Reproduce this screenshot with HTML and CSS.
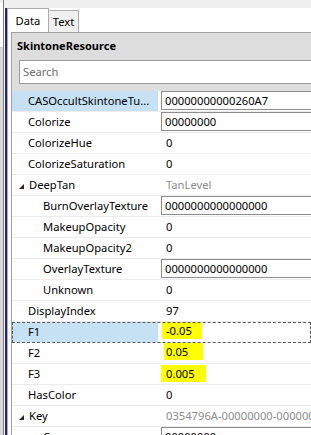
FILE: index.html
```html
<!DOCTYPE html>
<html lang="en">
<head>
    <meta charset="UTF-8">
    <title>SkintoneResource</title>
    <link rel="stylesheet" href="styles.css">
</head>
<body>
<div class="app">
    <!-- left window edge -->
    <div class="edge"></div>
    <div class="main">
        <div class="topband"></div>
        <div class="body">
            <!-- tab strip -->
            <div class="tabs">
                <div class="tab tab-active">Data</div>
                <div class="tab">Text</div>
            </div>
            <div class="page">
                <!-- property grid -->
                <div class="grid">
                    <div class="grid-title">SkintoneResource</div>
                    <div class="search">Search</div>
                    <div class="rows">
                        <div class="row selected">
                            <div class="name">CASOccultSkintoneTu...</div>
                            <div class="value"><span class="value-box">00000000000260A7</span></div>
                        </div>
                        <div class="row">
                            <div class="name">Colorize</div>
                            <div class="value"><span class="value-box">00000000</span></div>
                        </div>
                        <div class="row">
                            <div class="name">ColorizeHue</div>
                            <div class="value">0</div>
                        </div>
                        <div class="row">
                            <div class="name">ColorizeSaturation</div>
                            <div class="value">0</div>
                        </div>
                        <div class="row">
                            <div class="name name-group"><svg class="caret" width="5" height="5" viewBox="0 0 5 5"><polygon points="5,0 5,5 0,5" fill="#262626"/></svg>DeepTan</div>
                            <div class="value muted">TanLevel</div>
                        </div>
                        <div class="row">
                            <div class="name name-sub">BurnOverlayTexture</div>
                            <div class="value"><span class="value-box">0000000000000000</span></div>
                        </div>
                        <div class="row">
                            <div class="name name-sub">MakeupOpacity</div>
                            <div class="value">0</div>
                        </div>
                        <div class="row">
                            <div class="name name-sub">MakeupOpacity2</div>
                            <div class="value">0</div>
                        </div>
                        <div class="row">
                            <div class="name name-sub">OverlayTexture</div>
                            <div class="value"><span class="value-box">0000000000000000</span></div>
                        </div>
                        <div class="row">
                            <div class="name name-sub">Unknown</div>
                            <div class="value">0</div>
                        </div>
                        <div class="row">
                            <div class="name">DisplayIndex</div>
                            <div class="value">97</div>
                        </div>
                        <div class="row selected focus">
                            <div class="name">F1</div>
                            <div class="value"><span class="hl hl-1">-0.05</span></div>
                        </div>
                        <div class="row">
                            <div class="name">F2</div>
                            <div class="value"><span class="hl hl-2">0.05</span></div>
                        </div>
                        <div class="row">
                            <div class="name">F3</div>
                            <div class="value"><span class="hl hl-3">0.005</span></div>
                        </div>
                        <div class="row">
                            <div class="name">HasColor</div>
                            <div class="value">0</div>
                        </div>
                        <div class="row">
                            <div class="name name-group"><svg class="caret" width="5" height="5" viewBox="0 0 5 5"><polygon points="5,0 5,5 0,5" fill="#262626"/></svg>Key</div>
                            <div class="value muted">0354796A-00000000-00000000</div>
                        </div>
                        <div class="row">
                            <div class="name name-sub">C</div>
                            <div class="value"><span class="value-box">00000000</span></div>
                        </div>
                    </div>
                </div>
            </div>
        </div>
    </div>
</div>
</body>
</html>
```

FILE: styles.css
```css
* {
    margin: 0;
    padding: 0;
    box-sizing: border-box;
}

body {
    background: #fff;
    font-family: "Noto Sans", "Open Sans", sans-serif;
    font-size: 11.2px;
    color: #000;
    overflow: hidden;
}

.app {
    display: flex;
    height: 435px;
    overflow: hidden;
}

.edge {
    width: 4px;
    flex-shrink: 0;
    border-right: 1px solid #7d7d7d;
    background: linear-gradient(to bottom, #f0f0f0 3px, #fff 3px, #fff 47px, #c3cfdb 47px, #c3cfdb 48px, #d8d8d8 48px);
}

.main {
    flex: 1;
    min-width: 0;
    display: flex;
    flex-direction: column;
}

.topband {
    height: 8px;
    flex-shrink: 0;
    background: #f0f0f0;
}

.body {
    flex: 1;
    min-height: 0;
    margin-left: 1px;
    border-left: 2px solid #1d1d9c;
    display: flex;
    flex-direction: column;
}

/* tabs */
.tabs {
    display: flex;
    align-items: flex-end;
    height: 24px;
    flex-shrink: 0;
}

.tab {
    width: 30px;
    height: 22px;
    border-top: 1px solid #acacac;
    border-right: 1px solid #acacac;
    background: #f0f0f0;
    text-align: center;
    line-height: 21px;
}

.tab-active {
    width: 42px;
    height: 24px;
    border-left: 1px solid #acacac;
    background: #fff;
    line-height: 23px;
}

.page {
    flex: 1;
    min-height: 0;
    overflow: hidden;
    border-left: 1px solid #acacac;
    padding-left: 3px;
}

/* property grid */
.grid {
    border-left: 1px solid #a0a0a0;
    border-top: 1px solid #a0a0a0;
    background: #dddddd;
}

.grid-title {
    height: 27px;
    line-height: 26px;
    padding-left: 5px;
    font-weight: bold;
    font-size: 11px;
}

.search {
    height: 24px;
    margin-left: 7px;
    margin-right: -3px;
    padding-left: 3px;
    border: 1px solid #9a9a9a;
    background: #fff;
    color: #6d6d6d;
    line-height: 22px;
}

.rows {
    margin-top: 7px;
    background: #fff;
}

.row {
    display: flex;
    height: 21px;
    line-height: 20px;
    border-bottom: 1px solid #ececec;
    white-space: nowrap;
}

.name {
    width: 146px;
    flex-shrink: 0;
    padding-left: 16px;
    overflow: hidden;
}

.name-sub {
    padding-left: 31px;
}

.name-group {
    padding-left: 7px;
}

.caret {
    margin-right: 5px;
    vertical-align: 0;
}

.value {
    flex: 1;
    min-width: 0;
    margin-left: 3px;
    padding-left: 5px;
    display: flex;
    align-items: center;
    overflow: hidden;
}

.value-box {
    align-self: flex-start;
    flex: 1;
    height: 19px;
    margin-left: -5px;
    margin-right: -3px;
    padding-left: 3px;
    border: 1px solid #8c8c8c;
    line-height: 17px;
}

.muted {
    color: #8c8c8c;
}

.selected .name {
    background: #c7e1f4;
}

.focus {
    outline: 1px dashed #5a5a5a;
    outline-offset: -1px;
}

/* highlighter marks */
.hl {
    align-self: flex-start;
    background: #ffff00;
    margin-left: -4px;
    padding: 0 10px 0 4px;
    height: 18px;
    line-height: 18px;
}

.hl-1 {
    margin-top: 0;
    height: 17px;
}

.hl-2 {
    margin-top: -3px;
    height: 20px;
    margin-left: -2px;
    padding: 3px 15px 0 2px;
}

.hl-3 {
    margin-top: 1px;
    height: 17px;
    margin-left: -8px;
    padding: 0 11px 0 8px;
}
```
